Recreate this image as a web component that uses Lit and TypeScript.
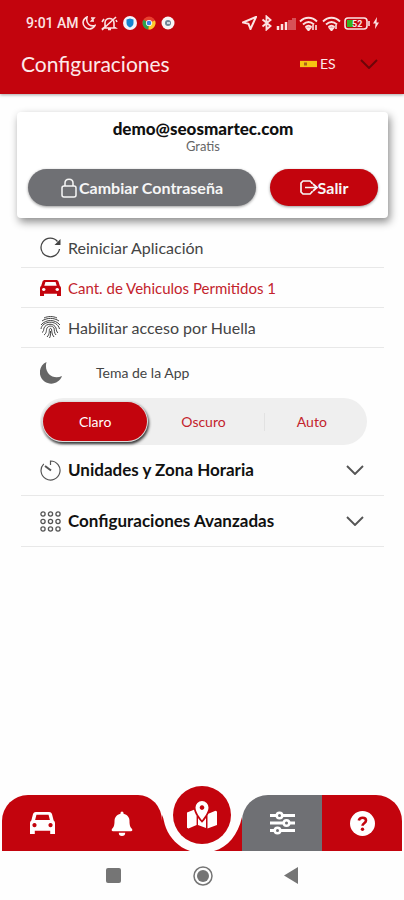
import { LitElement, html, css, svg } from "lit";
import { customElement, state } from "lit/decorators.js";
import { classMap } from "lit/directives/class-map.js";

const carShape = svg`
  <path fill-rule="evenodd" d="M5.6 0h12.8c1.3 0 2.2.7 2.7 1.9L22.7 8C23.6 8.6 24 9.5 24 10.6V21h-4.6v-3H4.6v3H0V10.600c0-1.100.4-2 1.300-2.600l1.600-6.100C3.400.7 4.300 0 5.600 0zM6.200 2.600L4.900 7.500h14.200l-1.300-4.900zM4.300 10.500a2 2 0 1 0 .01 0zM19.700 10.500a2 2 0 1 0 .01 0z"/>`;

@customElement("status-bar")
export class StatusBar extends LitElement {
  static styles = css`
    :host {
      display: flex;
      align-items: center;
      justify-content: space-between;
      height: 33px;
      padding: 13px 25px 0 26px;
      color: #fbe3e3;
      font: 500 14px/20px Roboto, "Liberation Sans", sans-serif;
    }
    .group { display: flex; align-items: center; gap: 3px; }
    .left { gap: 5px; }
    .time { margin-right: -2px; }
    svg { display: block; fill: none; stroke: currentColor; stroke-width: 1.6; }
  `;

  render() {
    const wifi = svg`
      <path d="M1 5.500C6 .5 13 .5 18 5.500M4 8.500c3.500-3.300 7.500-3.300 11 0M6.500 11c2-1.700 4-1.700 6 0" stroke-width="1.900"/>
      <path d="M7.500 12l2 2.500 2-2.500z" fill="currentColor"/>`;
    return html`
      <div class="group left">
        <span class="time">9:01 AM</span>
        <svg width="14" height="14" viewBox="0 0 14 14"><path d="M5 1C.5 3 0 8 3 11c3 3 8 2.500 10-1.500C8 11 3.500 7.500 5 1zM9 2h3L9.500 5H12"/></svg>
        <svg width="17" height="15" viewBox="0 0 17 15"><path d="M4 11V7c0-6 9-6 9 0v4l1.500 1h-12zM7 13.500h3M1 14L15 1M1 6l2-3M16 6l-1-2"/></svg>
        <svg width="14" height="14" viewBox="0 0 14 14"><circle cx="7" cy="7" r="7" fill="#f4f4fa" stroke="none"/><path d="M3.500 3.500L7 2.500l3.500 1V7c0 2-1.500 3.500-3.500 4.500C5 10.500 3.500 9 3.500 7z" fill="#1784cf" stroke="none"/></svg>
        <svg width="14" height="14" viewBox="0 0 14 14"><g stroke="none"><circle cx="7" cy="7" r="6.500" fill="#e8402f"/><path d="M7 7L1.400 3.700A6.500 6.500 0 0 0 6.500 13.500z" fill="#2fa04d"/><path d="M7 7l6-2.500A6.500 6.500 0 0 1 6.500 13.500z" fill="#fcc92c"/><circle cx="7" cy="7" r="3.100" fill="#fff"/><circle cx="7" cy="7" r="2.300" fill="#3d7fe8"/></g></svg>
        <svg width="14" height="14" viewBox="0 0 14 14"><g stroke="none"><circle cx="7" cy="7" r="6.500" fill="#f8f4f4"/><circle cx="7" cy="7" r="3" fill="#6f8495"/><path d="M6 6h3v2H6z" fill="#cdd9e0"/></g></svg>
      </div>
      <div class="group">
        <svg width="15" height="14" viewBox="0 0 15 14"><path d="M14 1L1 6.500l5.500 1.300L8.500 13z" stroke-width="2"/></svg>
        <svg width="13" height="16" viewBox="0 0 13 16"><path d="M2.500 4.500l8 6.500L6.500 14.500V1.500l4 3.500-8 6.500" stroke-width="1.900"/></svg>
        <svg width="20" height="14" viewBox="0 0 20 14"><g stroke-width="2.500"><path d="M2 14v-4M6 14V8M10 14V6"/><path d="M14 14V4M18 14V2" opacity=".35" stroke-width="4"/></g></svg>
        <svg width="20" height="15" viewBox="0 0 20 15">${wifi}<path d="M14 9v5M17 14V9"/></svg>
        <svg width="19" height="15" viewBox="0 0 19 15">${wifi}<path d="M14 9v4"/></svg>
        <svg width="26" height="13" viewBox="0 0 26 13">
          <rect x="1" y="1" width="22" height="11" rx="3"/>
          <rect x="3" y="3" width="6" height="7" fill="#35b61d" stroke="none"/>
          <path d="M25 4v5"/>
          <text x="8" y="10" font-size="9" font-weight="700" fill="currentColor" stroke="none">52</text>
        </svg>
        <svg width="6" height="12" viewBox="0 0 6 12"><path d="M4 0L0 6.500h2.500L2 12l4-6.500H3.500z" fill="currentColor" stroke="none"/></svg>
      </div>
    `;
  }
}

@customElement("tab-bar")
export class TabBar extends LitElement {
  static styles = css`
    :host { display: block; padding: 0 2px; }
    nav { display: flex; align-items: stretch; height: 56px; }
    a {
      display: flex;
      flex: 1;
      align-items: center;
      justify-content: center;
      color: #fff;
      background: #c3040d;
    }
    svg { display: block; fill: currentColor; }
    .first { border-top-left-radius: 26px; }
    .before { border-top-right-radius: 24px 26px; }
    .after { border-top-left-radius: 26px; background: #6f7074; }
    .last { border-top-right-radius: 26px; }
    .middle { position: relative; flex: 0 0 80px; background: none; }
    .notch { color: #c3040d; }
    .map {
      position: absolute;
      left: 11px;
      top: -9px;
      display: flex;
      align-items: center;
      justify-content: center;
      width: 58px;
      height: 58px;
      border-radius: 50%;
      background: #c3040d;
    }
  `;

  render() {
    return html`
      <nav aria-label="Principal">
        <a class="first" href="#vehiculos" aria-label="Vehículos">
          <svg width="25" height="22" viewBox="0 0 24 21">${carShape}</svg>
        </a>
        <a class="before" href="#alertas" aria-label="Alertas">
          <svg width="22" height="25" viewBox="0 0 22 25"><path d="M9.500 2a1.500 1.500 0 0 1 3 0v.8c4 .8 6 3.700 6 7.500 0 4.500 1 6 2.500 7.700.8 1 .2 2.300-1 2.300H2c-1.200 0-1.800-1.300-1-2.300 1.500-1.700 2.500-3.200 2.500-7.700 0-3.800 2-6.700 6-7.500zM7.800 21.700h6.400a3.200 3.200 0 0 1-6.400 0z"/></svg>
        </a>
        <a class="middle" href="#mapa" aria-label="Mapa">
          <svg class="notch" width="80" height="56" viewBox="0 0 80 56"><path d="M0 20C2 24 2 28 4 33C8 43 16 52 28 56H0zM80 22C76 40 66 52 52 56H80z"/></svg>
          <span class="map">
            <svg width="30" height="28" viewBox="0 0 30 28">
              <path d="M0 11.500L7 8.800c.6 2.500 1.600 4.400 2.600 6V24L1.500 27.500 0 26.800zM11 17c1.300 1.900 2.600 3.400 4 4.800 1.500-1.400 2.800-3 4-4.800v10L11 24zM20.500 14.500c.3-.6.6-1.200.8-1.800L28.500 9.700 30 10.500V24l-9.500 3.500z"/>
              <path fill-rule="evenodd" d="M15 0a6.500 6.500 0 0 1 6.500 6.600C21.500 11 17 17 15 19.300 13 17 8.500 11 8.500 6.600A6.500 6.500 0 0 1 15 0zm0 4.300a2.300 2.300 0 1 0 .01 0z"/>
            </svg>
          </span>
        </a>
        <a class="after" href="#ajustes" aria-label="Ajustes" aria-current="page">
          <svg width="25" height="24" viewBox="0 0 25 24">
            <path d="M0 3h25v3H0zM0 10.500h25v3H0zM0 18h25v3H0z"/>
            <circle cx="9.500" cy="4.500" r="4"/><circle cx="16.500" cy="12" r="4"/><circle cx="7.500" cy="19.500" r="4"/>
            <g fill="#6f7074"><circle cx="9.500" cy="4.500" r="1.500"/><circle cx="16.500" cy="12" r="1.500"/><circle cx="7.500" cy="19.500" r="1.500"/></g>
          </svg>
        </a>
        <a class="last" href="#ayuda" aria-label="Ayuda">
          <svg width="25" height="25" viewBox="0 0 25 25"><circle cx="12.500" cy="12.500" r="12.500"/><path d="M8.800 9.500C9.500 5.700 16 5.800 16 9.500c0 2.800-3.500 2.700-3.500 5.300" fill="none" stroke="#c3040d" stroke-width="2.600"/><circle cx="12.500" cy="18.300" r="1.700" fill="#c3040d"/></svg>
        </a>
      </nav>
    `;
  }
}

@customElement("app-root")
export class AppRoot extends LitElement {
  @state() private theme = "Claro";
  @state() private open = "";

  static styles = css`
    :host {
      display: flex;
      flex-direction: column;
      min-height: 100vh;
      background: #fefefe;
      color: #444;
      font: 400 16px/20px Lato, "Liberation Sans", sans-serif;
    }
    * { box-sizing: border-box; }
    h1, h2, p { margin: 0; }
    button, select { border: 0; padding: 0; background: none; color: inherit; font: inherit; cursor: pointer; }
    svg { display: block; flex: none; fill: none; stroke: currentColor; }

    header { background: #c3040d; box-shadow: 0 1px 3px rgba(0, 0, 0, 0.35); }
    .bar {
      display: flex;
      align-items: center;
      justify-content: space-between;
      height: 61px;
      padding: 0 26px 0 21px;
      color: #fde9e9;
    }
    h1 { font-size: 21px; line-height: 28px; font-weight: 400; }
    .lang { display: flex; align-items: center; }
    .flag { margin-right: 3px; }
    select { appearance: none; width: 40px; font-size: 14px; line-height: 20px; }
    .lang .chevron { color: #6d0508; }

    .card {
      margin: 18px 16px 10px 17px;
      padding: 8px 10px 12px 11px;
      border-radius: 4px;
      background: #fff;
      box-shadow: 2px 4px 9px rgba(0, 0, 0, 0.45);
      text-align: center;
    }
    h2 { color: #111; font-size: 17px; line-height: 18px; font-weight: 900; }
    .plan { color: #666; font-size: 13px; line-height: 16px; }
    .actions { display: flex; gap: 14px; margin-top: 15px; }
    .pill {
      display: flex;
      align-items: center;
      justify-content: center;
      height: 37px;
      border-radius: 19px;
      color: #f6f6f6;
      font-weight: 700;
      box-shadow: 0 1px 3px rgba(0, 0, 0, 0.4);
    }
    .password { flex: 228; gap: 2px; background: #6f7074; }
    .logout { flex: 108; background: #c3040d; }

    .list { margin: 0 20px 0 21px; }
    .row {
      display: flex;
      align-items: center;
      gap: 7px;
      width: 100%;
      height: 40px;
      padding: 0 20px 0 19px;
      border-bottom: 1px solid #e8e8e8;
      text-align: left;
    }
    .accent { color: #c3232c; font-size: 15px; }
    .accent svg { fill: #c3040d; stroke: none; }
    .tall { height: 51px; color: #111; font-weight: 700; font-size: 17px; }
    .tall svg { color: #555; }
    .tall span { flex: 1; }
    fieldset { margin: 0; padding: 0; border: 0; }
    legend { display: flex; align-items: center; gap: 34px; height: 50px; padding: 0 19px; font-size: 14px; }
    .segments {
      display: flex;
      gap: 4px;
      height: 47px;
      margin: 0 17px 0 19px;
      padding: 4px 3px;
      border-radius: 24px;
      background: #efefef;
    }
    .segment {
      position: relative;
      display: flex;
      flex: 1;
      align-items: center;
      justify-content: center;
      border-radius: 20px;
      color: #c3232c;
      font-size: 14px;
      cursor: pointer;
    }
    .segment input { position: absolute; inset: 0; margin: 0; opacity: 0; }
    .segment.on {
      color: #fff;
      background: #c3040d;
      box-shadow: 0 0 0 1px #ddd, 1px 2px 3px 1px rgba(0, 0, 0, 0.8);
    }
    .segment + .segment:last-child::before {
      content: "";
      position: absolute;
      left: 4px;
      height: 18px;
      border-left: 1px solid #e2e2e2;
    }

    tab-bar { margin-top: auto; }
    .system {
      display: flex;
      align-items: center;
      justify-content: space-between;
      height: 49px;
      padding: 0 106px;
      color: #757575;
    }
    .system button { display: flex; }
  `;

  private chevron = html`<svg class="chevron" width="18" height="10" viewBox="0 0 18 10" stroke-width="1.900"><path d="M1 1l8 8 8-8"/></svg>`;

  private toggle(name: string) {
    this.open = this.open === name ? "" : name;
  }

  render() {
    return html`
      <header>
        <status-bar></status-bar>
        <div class="bar">
          <h1>Configuraciones</h1>
          <div class="lang">
            <svg class="flag" width="17" height="8" viewBox="0 0 17 8" stroke="none"><path fill="#c61c18" stroke="none" d="M0 0h17v8H0z"/><path fill="#f6c512" stroke="none" d="M0 1h17v6H0z"/><path fill="#a9611b" stroke="none" d="M4 2.500h3v3H4z"/></svg>
            <select aria-label="Idioma"><option>ES</option><option>EN</option></select>
            ${this.chevron}
          </div>
        </div>
      </header>
      <main>
        <section class="card">
          <h2>demo@seosmartec.com</h2>
          <p class="plan">Gratis</p>
          <div class="actions">
            <button class="pill password">
              <svg width="16" height="20" viewBox="0 0 16 20" stroke-width="1.500"><rect x="1" y="8" width="14" height="11" rx="2"/><path d="M4 8V5c0-5 8-5 8 0v3"/></svg>
              Cambiar Contraseña
            </button>
            <button class="pill logout">
              <svg width="18" height="16" viewBox="0 0 18 16" stroke-width="1.700"><path d="M12 4V3L10 1H3L1 3v9l2 2h7l2-2v-1M5 7.500h11M13 4l4 3.500-4 3.500"/></svg>
              Salir
            </button>
          </div>
        </section>
        <section class="list">
          <button class="row">
            <svg width="21" height="21" viewBox="0 0 21 21" stroke-width="1.300"><path d="M17.500 4.500A9.300 9.300 0 1 0 19.500 12"/><path d="M20.500 2v6h-6z" fill="currentColor" stroke="none"/></svg>
            Reiniciar Aplicación
          </button>
          <button class="row accent">
            <svg width="21" height="16" viewBox="0 0 24 21" preserveAspectRatio="none">${carShape}</svg>
            Cant. de Vehiculos Permitidos 1
          </button>
          <button class="row">
            <svg width="21" height="23" viewBox="0 0 21 23" stroke-width="1"><path d="M4 2c4-2 9-2 13 0M2 5c5-3.500 12-3.500 17 0M1 9c5-6 14-6 19 0M1 13c1-8 16-10 18.500 0M2 16.500c2-1 1.500-3 2-4.500 2-5 10-5 12 0 .5 2 .5 4 2 5M4 19c3-2 2-5 3-7 1.500-2.500 5.500-2.500 7 0 .6 2.500 0 5 2 7M7 21c3-3 2-6 2.500-8 .5-.8 1.500-.8 2 0 .5 3 0 5 2.500 8M9.500 22c1.200-2 1-3.500 1-7"/></svg>
            Habilitar acceso por Huella
          </button>
          <fieldset>
            <legend>
              <svg width="22" height="22" viewBox="0 0 22 22"><path fill="#666" stroke="none" d="M6.500 0C-2 4-2 15 4.500 19.500 11 24 19.500 21 22 14 13 18.500 3.500 11 6.500 0z"/></svg>
              Tema de la App
            </legend>
            <div class="segments">
              ${["Claro", "Oscuro", "Auto"].map(
                (name) => html`
                  <label class="segment ${classMap({ on: this.theme === name })}">
                    <input type="radio" name="theme" .checked=${this.theme === name} @change=${() => (this.theme = name)} />
                    ${name}
                  </label>
                `
              )}
            </div>
          </fieldset>
          <button class="row tall" aria-expanded=${this.open === "units"} @click=${() => this.toggle("units")}>
            <svg width="21" height="21" viewBox="0 0 21 21" stroke-width="1.200"><path d="M10.500 5V1a9.500 9.500 0 1 1-6.700 2.800"/><path d="M5 6l6 4.500" stroke-width="2"/></svg>
            <span>Unidades y Zona Horaria</span>
            ${this.chevron}
          </button>
          <button class="row tall" aria-expanded=${this.open === "advanced"} @click=${() => this.toggle("advanced")}>
            <svg width="21" height="21" viewBox="0 0 21 21" stroke-width="1.300">
              ${[3, 10.5, 18].map((y) => [3, 10.5, 18].map((x) => svg`<circle cx=${x} cy=${y} r="2.100"/>`))}
            </svg>
            <span>Configuraciones Avanzadas</span>
            ${this.chevron}
          </button>
        </section>
      </main>
      <tab-bar></tab-bar>
      <div class="system">
        <button aria-label="Recientes"><svg width="15" height="15" viewBox="0 0 15 15"><rect width="15" height="15" rx="2" fill="currentColor" stroke="none"/></svg></button>
        <button aria-label="Inicio"><svg width="20" height="20" viewBox="0 0 20 20"><circle cx="10" cy="10" r="9" stroke-width="1.500"/><circle cx="10" cy="10" r="6" fill="currentColor" stroke="none"/></svg></button>
        <button aria-label="Atrás"><svg width="14" height="17" viewBox="0 0 14 17"><path d="M14 0v17L0 8.500z" fill="currentColor" stroke="none"/></svg></button>
      </div>
    `;
  }
}
